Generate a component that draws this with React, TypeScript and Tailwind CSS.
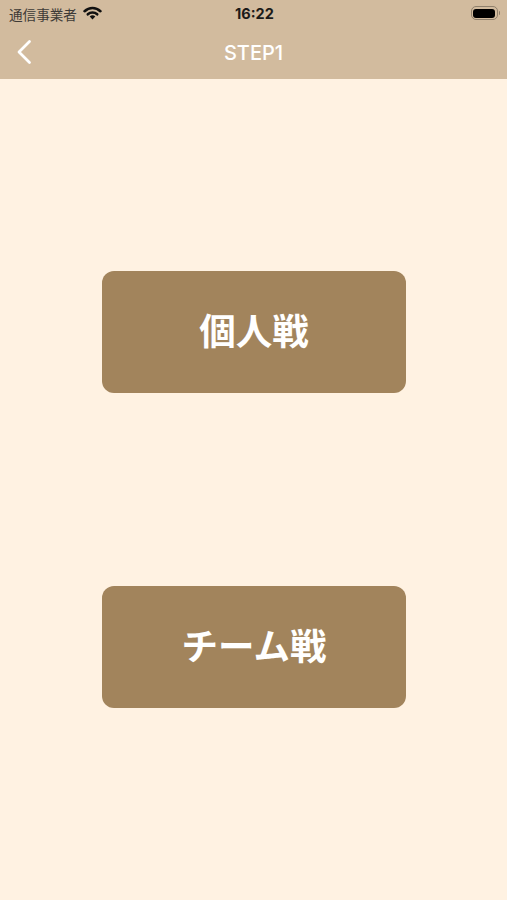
const font = { sans: "font-['Noto_Sans_CJK_JP','Liberation_Sans',sans-serif]" };

const StepButton = ({ label }: { label: string }) => {
  return (
    <button className={`flex h-[122px] w-[304px] items-center justify-center rounded-[12px] bg-[#a2845c] pb-[3px] pl-[1px] text-[36.5px] leading-none font-bold text-white ${font.sans}`}>
      {label}
    </button>
  );
};

const App = () => {
  return (
    <div className="flex h-[900px] w-[507px] flex-col overflow-hidden bg-[#fff2e2]">
      {/* header */}
      <div className="h-[79px] shrink-0 bg-[#d2bb9e]">
        {/* status bar */}
        <div className="flex h-[29px] items-center justify-between pr-[7px] pl-[9px]">
          <div className="flex w-[150px] items-center gap-[6px]">
            <span className={`text-[13.6px] leading-none text-[#3d3a36] ${font.sans}`}>通信事業者</span>
            <svg width="19" height="14" viewBox="0 0 19 14" className="mb-[3px]">
              <path d="M1.6 5.2a11.5 11.5 0 0 1 15.8 0" fill="none" stroke="#111" strokeWidth="2.6" strokeLinecap="round" />
              <path d="M4.8 8.3a7 7 0 0 1 9.4 0" fill="none" stroke="#111" strokeWidth="2.6" strokeLinecap="round" />
              <path d="M6.7 10.6a4 4 0 0 1 5.6 0L9.5 13.6z" fill="#111" />
            </svg>
          </div>
          <span className="text-[14.5px] leading-none font-bold text-[#1c1a18] font-['Inter','Liberation_Sans',sans-serif]">16:22</span>
          <div className="mb-[3px] flex w-[150px] items-center justify-end">
            <div className="h-[14px] w-[27px] rounded-[5px] border border-[#8f806c] p-[1.5px]">
              <div className="h-full w-full rounded-[3px] bg-black" />
            </div>
            <div className="ml-[1px] h-[4px] w-[1.5px] rounded-r-full bg-[#8f806c]" />
          </div>
        </div>

        {/* nav bar */}
        <div className="relative flex h-[50px] items-center justify-center">
          <svg width="16" height="26" viewBox="0 0 16 26" className="absolute top-[10px] left-[16px]">
            <path d="M13.5 2.5 L3 13 L13.5 23.5" fill="none" stroke="#fff" strokeWidth="2.8" strokeLinecap="round" strokeLinejoin="round" />
          </svg>
          <span className="mb-[2px] text-[20px] leading-none font-medium text-white font-['Inter','Liberation_Sans',sans-serif]">STEP1</span>
        </div>
      </div>

      {/* mode select */}
      <div className="flex flex-col items-center gap-[193px] pt-[192px]">
        <StepButton label="個人戦" />
        <StepButton label="チーム戦" />
      </div>
    </div>
  );
};

export default App;
